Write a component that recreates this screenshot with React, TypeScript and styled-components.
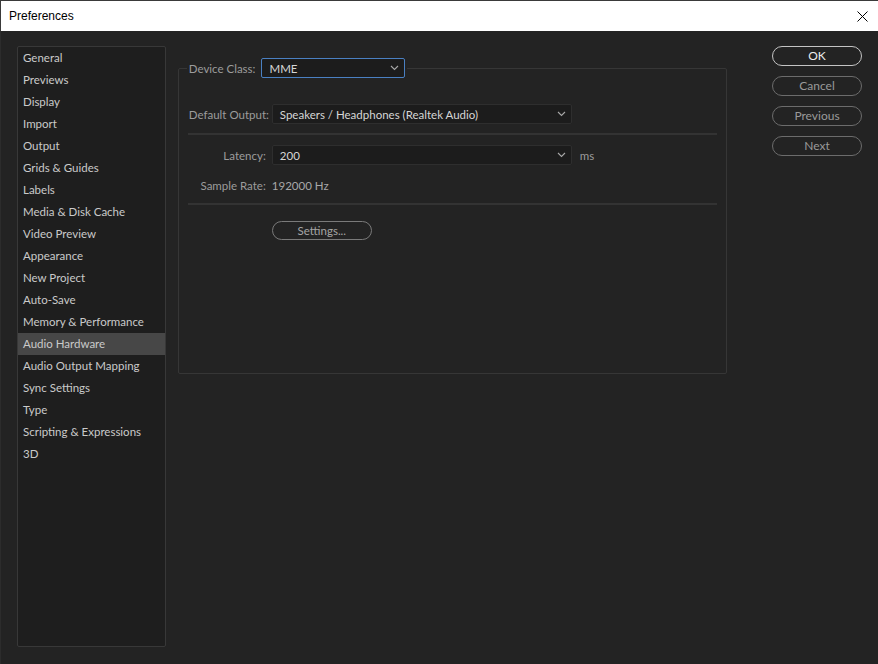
import React from "react";
import styled, { createGlobalStyle } from "styled-components";

const GlobalStyle = createGlobalStyle`
  html, body {
    margin: 0;
    padding: 0;
    background: #232323;
  }
  * {
    box-sizing: border-box;
  }
`;

const uiFont = `"Lato", "Noto Sans", "Liberation Sans", sans-serif`;

const Window = styled.div`
  width: 878px;
  height: 664px;
  display: flex;
  flex-direction: column;
  background: #232323;
  font-family: ${uiFont};
  font-size: 11.5px;
  overflow: hidden;
`;

const TitleBar = styled.div`
  height: 31px;
  flex-shrink: 0;
  display: flex;
  align-items: center;
  justify-content: space-between;
  background: #fff;
  border-top: 1px solid #3a3a3a;
  border-left: 1px solid #3a3a3a;
  padding: 0 10px 0 8px;
  color: #000;
  font-family: "Liberation Sans", sans-serif;
  font-size: 12px;
`;

const CloseButton = styled.div`
  width: 12px;
  height: 12px;
  display: flex;
  align-items: center;
  justify-content: center;
`;

const Body = styled.div`
  flex: 1;
  display: flex;
  align-items: flex-start;
  padding: 15px 16px 18px 16px;
  border-left: 1px solid #2c2c2c;
`;

const Sidebar = styled.ul`
  width: 149px;
  height: 601px;
  margin: 0;
  padding: 0;
  list-style: none;
  background: #1e1e1e;
  border: 1px solid #383838;
  border-radius: 2px;
`;

const SidebarItem = styled.li<{ active?: boolean }>`
  height: 22px;
  line-height: 22px;
  padding-left: 5px;
  color: #cacaca;
  white-space: nowrap;
  background: ${({ active }) => (active ? "#474747" : "transparent")};
`;

const Main = styled.div`
  margin-left: 12px;
  width: 550px;
`;

const Group = styled.fieldset`
  margin: 12px 0 0 0;
  padding: 0 9px 0 10px;
  height: 316px;
  border: 1px solid #363636;
  border-radius: 2px;
`;

const Legend = styled.legend`
  display: flex;
  align-items: center;
  gap: 6px;
  margin-left: -2px;
  padding: 0 2px;
  color: #9c9c9c;
`;

const SelectBox = styled.div<{ width: number; focused?: boolean }>`
  width: ${({ width }) => width}px;
  height: 20px;
  display: flex;
  align-items: center;
  justify-content: space-between;
  padding: 0 5px 0 7px;
  background: #1c1c1c;
  border: 1px solid ${({ focused }) => (focused ? "#4a80c2" : "#2e2e2e")};
  border-radius: 2px;
  color: #d6d6d6;
  white-space: nowrap;
`;

const Rows = styled.div`
  display: flex;
  flex-direction: column;
`;

const Row = styled.div<{ top: number }>`
  display: flex;
  align-items: center;
  gap: 6px;
  margin-top: ${({ top }) => top}px;
  height: 20px;
`;

const Label = styled.span`
  width: 77px;
  text-align: right;
  color: #9c9c9c;
  white-space: nowrap;
`;

const Value = styled.span`
  color: #a8a8a8;
`;

const Unit = styled.span`
  color: #9c9c9c;
  margin-left: 2px;
`;

const Separator = styled.div<{ top: number }>`
  height: 2px;
  margin-top: ${({ top }) => top}px;
  margin-left: -1px;
  background: #333;
`;

const PillButton = styled.button<{ primary?: boolean }>`
  width: 90px;
  height: 20px;
  padding: 0;
  background: transparent;
  border: 1px solid ${({ primary }) => (primary ? "#c4c4c4" : "#6c6c6c")};
  border-radius: 10px;
  color: ${({ primary }) => (primary ? "#ececec" : "#9a9a9a")};
  font-family: ${uiFont};
  font-size: 12px;
  line-height: 18px;
`;

const SettingsButton = styled(PillButton)`
  width: 100px;
  height: 19px;
  border-color: #7a7a7a;
  color: #a6a6a6;
  font-size: 11.5px;
  line-height: 17px;
`;

const SettingsRow = styled.div`
  margin: 16px 0 0 83px;
`;

const ButtonColumn = styled.div`
  margin-left: 45px;
  display: flex;
  flex-direction: column;
  gap: 10px;
`;

const Chevron = () => (
  <svg width="9" height="6" viewBox="0 0 9 6">
    <path d="M1 1l3.5 3.5L8 1" fill="none" stroke="#a8a8a8" strokeWidth="1.1" />
  </svg>
);

const sections = [
  "General",
  "Previews",
  "Display",
  "Import",
  "Output",
  "Grids & Guides",
  "Labels",
  "Media & Disk Cache",
  "Video Preview",
  "Appearance",
  "New Project",
  "Auto-Save",
  "Memory & Performance",
  "Audio Hardware",
  "Audio Output Mapping",
  "Sync Settings",
  "Type",
  "Scripting & Expressions",
  "3D",
];

export default function App() {
  return (
    <>
      <GlobalStyle />
      <Window>
        <TitleBar>
          <span>Preferences</span>
          <CloseButton>
            <svg width="11" height="11" viewBox="0 0 11 11">
              <path d="M0.5 0.5l10 10M10.5 0.5l-10 10" stroke="#000" strokeWidth="1" />
            </svg>
          </CloseButton>
        </TitleBar>
        <Body>
          <Sidebar>
            {sections.map((s) => (
              <SidebarItem key={s} active={s === "Audio Hardware"}>
                {s}
              </SidebarItem>
            ))}
          </Sidebar>
          <Main>
            <Group>
              <Legend>
                Device Class:
                <SelectBox width={144} focused>
                  MME
                  <Chevron />
                </SelectBox>
              </Legend>
              <Rows>
                <Row top={26}>
                  <Label>Default Output:</Label>
                  <SelectBox width={300}>
                    Speakers / Headphones (Realtek Audio)
                    <Chevron />
                  </SelectBox>
                </Row>
                <Separator top={9} />
                <Row top={10}>
                  <Label>Latency:</Label>
                  <SelectBox width={300}>
                    200
                    <Chevron />
                  </SelectBox>
                  <Unit>ms</Unit>
                </Row>
                <Row top={10}>
                  <Label>Sample Rate:</Label>
                  <Value>192000 Hz</Value>
                </Row>
                <Separator top={8} />
                <SettingsRow>
                  <SettingsButton>Settings...</SettingsButton>
                </SettingsRow>
              </Rows>
            </Group>
          </Main>
          <ButtonColumn>
            <PillButton primary>OK</PillButton>
            <PillButton>Cancel</PillButton>
            <PillButton>Previous</PillButton>
            <PillButton>Next</PillButton>
          </ButtonColumn>
        </Body>
      </Window>
    </>
  );
}
